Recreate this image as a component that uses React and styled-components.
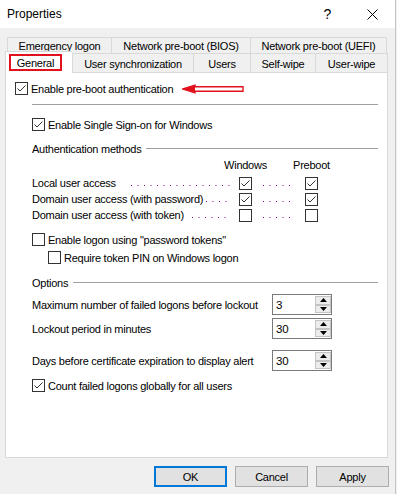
import React from 'react';
import styled, { createGlobalStyle } from 'styled-components';

const GlobalStyle = createGlobalStyle`
  html, body {
    margin: 0;
    padding: 0;
    background: #f0f0f0;
  }
  body {
    font-family: "Liberation Sans", Arial, sans-serif;
    font-size: 11px;
    letter-spacing: -0.25px;
    color: #000;
  }
`;

const Window = styled.div`
  width: 396px;
  height: 494px;
  box-sizing: border-box;
  border-right: 1px solid #c4c4c4;
  background: #f0f0f0;
  display: flex;
  flex-direction: column;
`;

const TitleBar = styled.div`
  height: 28px;
  background: #fff;
  display: flex;
  align-items: center;
  padding-left: 7px;
  font-size: 12px;
  letter-spacing: 0;
`;

const Title = styled.div`
  flex: 1;
`;

const TitleButton = styled.div`
  width: 45px;
  height: 28px;
  display: flex;
  align-items: center;
  justify-content: center;
  font-size: 14px;
`;

const TabStrip = styled.div`
  margin-top: 9px;
  display: flex;
  flex-direction: column;
`;

const TabRow = styled.div`
  display: flex;
  height: ${p => p.$h}px;
  padding-left: ${p => p.$indent}px;
`;

const Tab = styled.div`
  width: ${p => p.$w}px;
  box-sizing: border-box;
  border: 1px solid #d9d9d9;
  border-bottom: none;
  border-right: none;
  display: flex;
  justify-content: center;
  align-items: center;
  padding-top: ${p => p.$pad ?? 2}px;
  white-space: nowrap;
  &:last-child {
    border-right: 1px solid #d9d9d9;
  }
`;

const ActiveTab = styled(Tab)`
  position: relative;
  z-index: 1;
  background: #fff;
  margin-top: -2px;
  height: 22px;
  justify-content: flex-start;
  align-items: flex-start;
  padding: 2px 0 0 3px;
`;

const Marked = styled.span`
  width: 53px;
  height: 17px;
  box-sizing: border-box;
  border: 2px solid #e3111e;
  display: flex;
  align-items: center;
  justify-content: center;
`;

const Panel = styled.div`
  margin-left: 5px;
  width: 383px;
  height: 386px;
  box-sizing: border-box;
  border: 1px solid #d9d9d9;
  background: #fff;
  padding: 7px 0 0 9px;
`;

const Indent = styled.div`
  margin-left: 17px;
  margin-right: 9px;
`;

const Separator = styled.div`
  height: 1px;
  background: #a0a0a0;
  margin-top: 7px;
`;

const CheckRow = styled.div`
  display: flex;
  align-items: center;
  gap: 3px;
  height: 17px;
  margin-top: ${p => p.$top || 0}px;
  margin-left: ${p => p.$indent || 0}px;
  white-space: nowrap;
`;

const Box = styled.span`
  width: 13px;
  height: 13px;
  box-sizing: border-box;
  border: 1px solid #333;
  background: #fff;
  display: inline-flex;
  align-items: center;
  justify-content: center;
  flex: none;
`;

const Arrow = styled.svg`
  margin-left: 6px;
  flex: none;
`;

const GroupHeader = styled.div`
  display: flex;
  align-items: center;
  height: 16px;
  margin-top: ${p => p.$top}px;
`;

const GroupLine = styled.div`
  flex: 1;
  height: 1px;
  margin-left: 5px;
  margin-top: -1px;
  background: #a0a0a0;
`;

const MethodGrid = styled.div`
  display: grid;
  grid-template-columns: 207px 13px 53px 13px;
  align-items: center;
  height: 16px;
  margin-top: ${p => p.$top || 0}px;
  white-space: nowrap;
`;

const ColHead = styled.span`
  justify-self: center;
`;

const LabelCell = styled.div`
  display: flex;
  align-items: center;
`;

const Leader = styled.span`
  flex: 1;
  height: 1px;
  margin: 5px ${p => p.$right}px 0 ${p => p.$left}px;
  background-image: linear-gradient(to right, #800080 1px, transparent 1px);
  background-size: 6.5px 1px;
  background-repeat: repeat-x;
`;

const LeaderCell = styled.div`
  display: flex;
  align-items: center;
`;

const OptionRow = styled.div`
  display: grid;
  grid-template-columns: 240px 60px;
  align-items: center;
  height: 21px;
  margin-top: ${p => p.$top}px;
  white-space: nowrap;
`;

const SpinBox = styled.div`
  display: flex;
  width: 60px;
  height: 21px;
  box-sizing: border-box;
`;

const SpinField = styled.div`
  flex: 1;
  box-sizing: border-box;
  border: 1px solid #7a7a7a;
  border-right: none;
  display: flex;
  align-items: center;
  padding-left: 3px;
  font-size: 11.5px;
`;

const SpinButtons = styled.div`
  width: 17px;
  display: flex;
  flex-direction: column;
  box-sizing: border-box;
  border: 1px solid #7a7a7a;
  border-left: none;
  padding: 1px 0;
`;

const SpinButton = styled.div`
  flex: 1;
  box-sizing: border-box;
  border: 1px solid #c4c4c4;
  background: #ececec;
  display: flex;
  align-items: center;
  justify-content: center;
`;

const Footer = styled.div`
  margin-top: 8px;
  display: flex;
  justify-content: flex-end;
  gap: 8px;
  padding-right: 6px;
`;

const Button = styled.button`
  width: 73px;
  height: 21px;
  box-sizing: border-box;
  background: #e1e1e1;
  border: ${p => (p.$default ? '2px solid #0078d7' : '1px solid #adadad')};
  font-family: "Liberation Sans", Arial, sans-serif;
  font-size: 11px;
  letter-spacing: -0.25px;
  color: #000;
  padding: 0;
`;

function Check({ checked }) {
  return (
    <Box>
      {checked && (
        <svg width="11" height="11" viewBox="0 0 11 11">
          <polyline points="1.5,5.5 4,8 9.5,2.5" fill="none" stroke="#333" strokeWidth="1" />
        </svg>
      )}
    </Box>
  );
}

function Spin({ value }) {
  return (
    <SpinBox>
      <SpinField>{value}</SpinField>
      <SpinButtons>
        <SpinButton>
          <svg width="7" height="4" viewBox="0 0 7 4"><polygon points="3.5,0 7,4 0,4" fill="#000" /></svg>
        </SpinButton>
        <SpinButton>
          <svg width="7" height="4" viewBox="0 0 7 4"><polygon points="0,0 7,0 3.5,4" fill="#000" /></svg>
        </SpinButton>
      </SpinButtons>
    </SpinBox>
  );
}

const methods = [
  { label: 'Local user access', gap: 15, win: true, pre: true },
  { label: 'Domain user access (with password)', gap: 3, win: true, pre: true },
  { label: 'Domain user access (with token)', gap: 8, win: false, pre: false },
];

export default function App() {
  return (
    <>
      <GlobalStyle />
      <Window>
        <TitleBar>
          <Title>Properties</Title>
          <TitleButton>?</TitleButton>
          <TitleButton>
            <svg width="11" height="11" viewBox="0 0 11 11">
              <path d="M0.5 0.5 L10.5 10.5 M10.5 0.5 L0.5 10.5" stroke="#000" strokeWidth="1" />
            </svg>
          </TitleButton>
        </TitleBar>

        <TabStrip>
          <TabRow $h={16} $indent={7}>
            <Tab $w={104} $pad={0}>Emergency logon</Tab>
            <Tab $w={139} $pad={0}>Network pre-boot (BIOS)</Tab>
            <Tab $w={137} $pad={0}>Network pre-boot (UEFI)</Tab>
          </TabRow>
          <TabRow $h={19} $indent={5}>
            <ActiveTab $w={67}><Marked>General</Marked></ActiveTab>
            <Tab $w={121}>User synchronization</Tab>
            <Tab $w={57}>Users</Tab>
            <Tab $w={65}>Self-wipe</Tab>
            <Tab $w={73}>User-wipe</Tab>
          </TabRow>
        </TabStrip>

        <Panel>
          <CheckRow>
            <Check checked />
            <span>Enable pre-boot authentication</span>
            <Arrow width="62" height="10" viewBox="0 0 62 10">
              <polygon points="0.8,5 13,1.2 13,2.8 61,2.8 61,7.2 13,7.2 13,8.8" fill="#fff" stroke="#e3111e" strokeWidth="1.4" />
              <polygon points="0.8,5 13,1.2 13,8.8" fill="#e3111e" />
            </Arrow>
          </CheckRow>

          <Indent>
            <Separator />
            <CheckRow $top={11}>
              <Check checked />
              <span>Enable Single Sign-on for Windows</span>
            </CheckRow>

            <GroupHeader $top={8}>
              <span>Authentication methods</span>
              <GroupLine />
            </GroupHeader>

            <MethodGrid>
              <span />
              <ColHead>Windows</ColHead>
              <span />
              <ColHead>Preboot</ColHead>
            </MethodGrid>
            {methods.map((m, i) => (
              <MethodGrid key={m.label} $top={i === 0 ? 2 : 0}>
                <LabelCell>
                  <span>{m.label}</span>
                  <Leader $left={m.gap} $right={9} />
                </LabelCell>
                <Check checked={m.win} />
                <LeaderCell>
                  <Leader $left={11} $right={15} />
                </LeaderCell>
                <Check checked={m.pre} />
              </MethodGrid>
            ))}

            <CheckRow $top={8}>
              <Check />
              <span>Enable logon using "password tokens"</span>
            </CheckRow>
            <CheckRow $top={1} $indent={16}>
              <Check />
              <span>Require token PIN on Windows logon</span>
            </CheckRow>

            <GroupHeader $top={9}>
              <span>Options</span>
              <GroupLine />
            </GroupHeader>
            <OptionRow $top={3}>
              <span>Maximum number of failed logons before lockout</span>
              <Spin value="3" />
            </OptionRow>
            <OptionRow $top={3}>
              <span>Lockout period in minutes</span>
              <Spin value="30" />
            </OptionRow>
            <OptionRow $top={11}>
              <span>Days before certificate expiration to display alert</span>
              <Spin value="30" />
            </OptionRow>
            <CheckRow $top={6}>
              <Check checked />
              <span>Count failed logons globally for all users</span>
            </CheckRow>
          </Indent>
        </Panel>

        <Footer>
          <Button $default>OK</Button>
          <Button>Cancel</Button>
          <Button>Apply</Button>
        </Footer>
      </Window>
    </>
  );
}
